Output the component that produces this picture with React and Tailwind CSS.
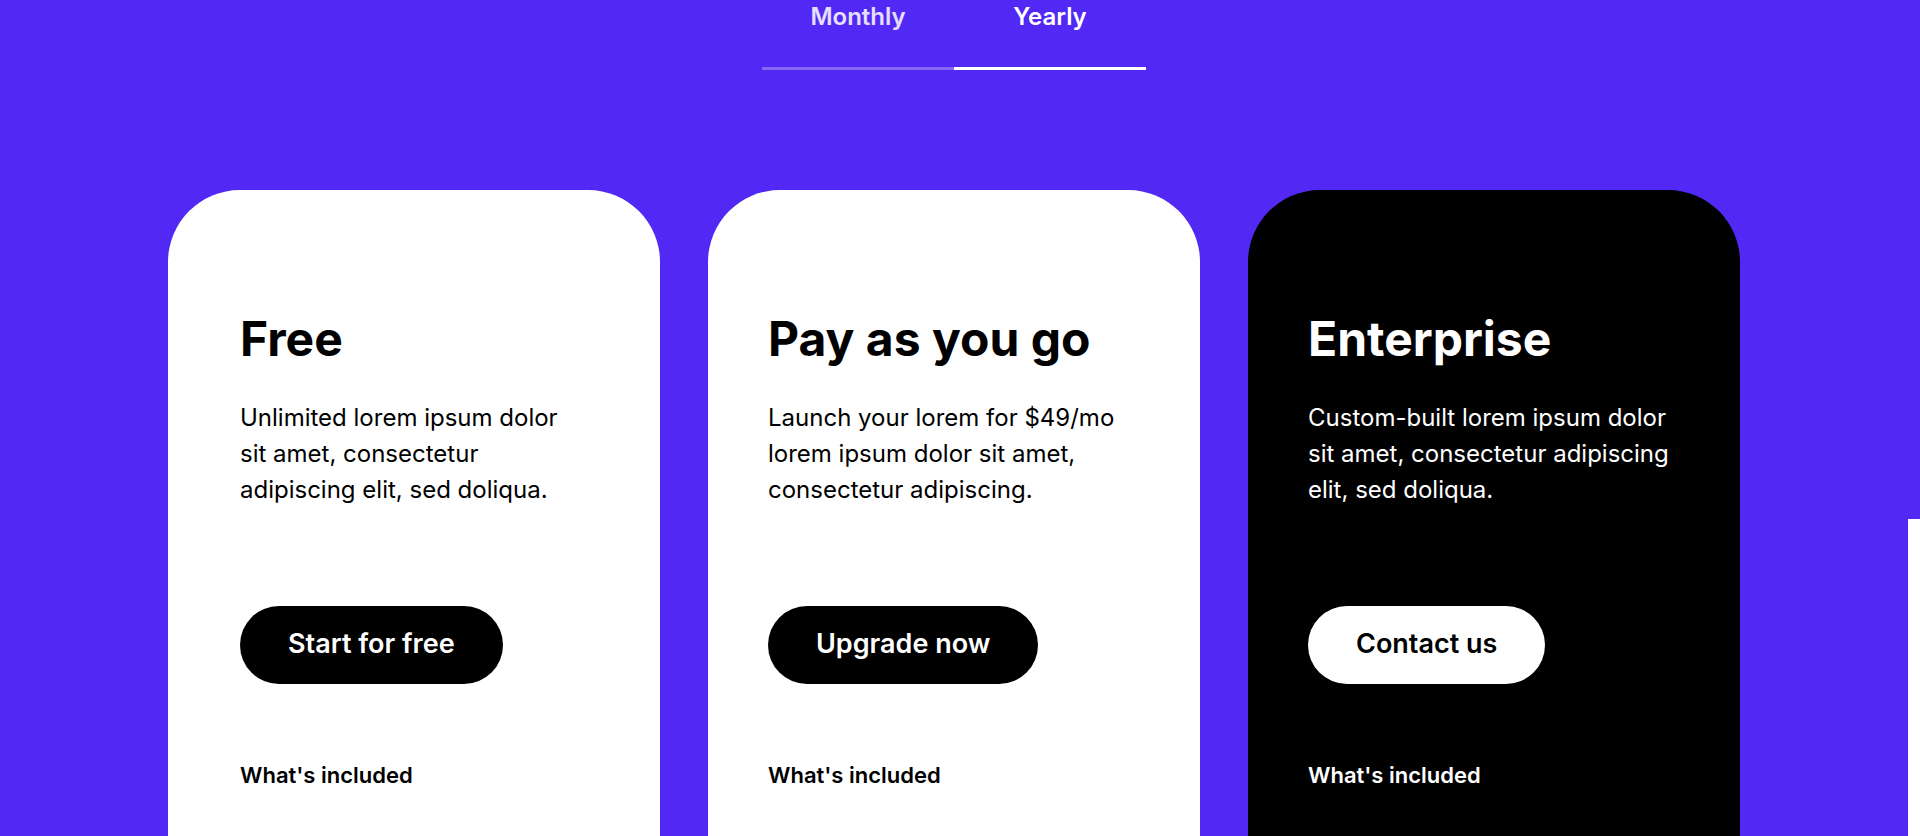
import React, { useState } from 'react';

const plans = [
  {
    name: 'Free',
    desc: 'Unlimited lorem ipsum dolor sit amet, consectetur adipiscing elit, sed doliqua.',
    cta: 'Start for free',
    dark: false,
    pad: 'px-[72px]',
  },
  {
    name: 'Pay as you go',
    desc: 'Launch your lorem for $49/mo lorem ipsum dolor sit amet, consectetur adipiscing.',
    cta: 'Upgrade now',
    dark: false,
    pad: 'px-[60px]',
  },
  {
    name: 'Enterprise',
    desc: 'Custom-built lorem ipsum dolor sit amet, consectetur adipiscing elit, sed doliqua.',
    cta: 'Contact us',
    dark: true,
    pad: 'px-[60px]',
  },
];

const features = ['Lorem ipsum dolor sit amet', 'Consectetur adipiscing elit', 'Sed do eiusmod tempor'];

const Check = ({ className }) => (
  <svg className={className} fill="none" stroke="currentColor" viewBox="0 0 24 24">
    <path strokeLinecap="round" strokeLinejoin="round" strokeWidth="2.5" d="M5 13l4 4L19 7"></path>
  </svg>
);

const PlanCard = ({ plan }) => (
  <div
    className={`w-[492px] shrink-0 rounded-[72px] pt-[120px] pb-20 ${plan.pad} ${
      plan.dark ? 'bg-black text-white' : 'bg-white text-black'
    }`}
  >
    <h2 className="text-[48px] leading-[1.2] font-bold">{plan.name}</h2>
    <p className="mt-[32px] text-[24px] leading-[36px]">{plan.desc}</p>

    <button
      className={`mt-[98px] h-[78px] px-12 rounded-full text-[27px] font-semibold ${
        plan.dark ? 'bg-white text-black' : 'bg-black text-white'
      }`}
    >
      {plan.cta}
    </button>

    <h3 className="mt-[75px] text-[22px] leading-[33px] font-semibold">What's included</h3>

    <ul className="mt-[39px] flex flex-col gap-4">
      {features.map((f) => (
        <li key={f} className="flex items-start gap-3 text-[20px] leading-[30px]">
          <Check className={`w-5 h-5 mt-[6px] shrink-0 ${plan.dark ? 'text-gray-300' : 'text-gray-400'}`} />
          <span>{f}</span>
        </li>
      ))}
    </ul>
  </div>
);

export default function App() {
  const [period, setPeriod] = useState('yearly');

  return (
    <div className="flex w-full h-[836px] overflow-hidden bg-white font-['Inter',sans-serif]">
      <main className="w-[1908px] shrink-0 bg-[#5228f5] flex flex-col items-center">
        {/* Billing toggle */}
        <div className="flex">
          {[
            { id: 'monthly', label: 'Monthly' },
            { id: 'yearly', label: 'Yearly' },
          ].map((t) => (
            <button
              key={t.id}
              onClick={() => setPeriod(t.id)}
              className={`w-[192px] text-center text-2xl font-semibold pt-px pb-[34px] border-b-[3px] ${
                period === t.id ? 'text-white border-white' : 'text-white/85 border-white/30'
              }`}
            >
              {t.label}
            </button>
          ))}
        </div>

        {/* Plans */}
        <div className="mt-[120px] flex gap-12">
          {plans.map((p) => (
            <PlanCard key={p.name} plan={p} />
          ))}
        </div>
      </main>

      {/* Right gutter */}
      <div className="w-[12px] shrink-0 flex flex-col">
        <div className="h-[519px] bg-[#5228f5]"></div>
        <div className="flex-1 bg-white"></div>
      </div>
    </div>
  );
}
